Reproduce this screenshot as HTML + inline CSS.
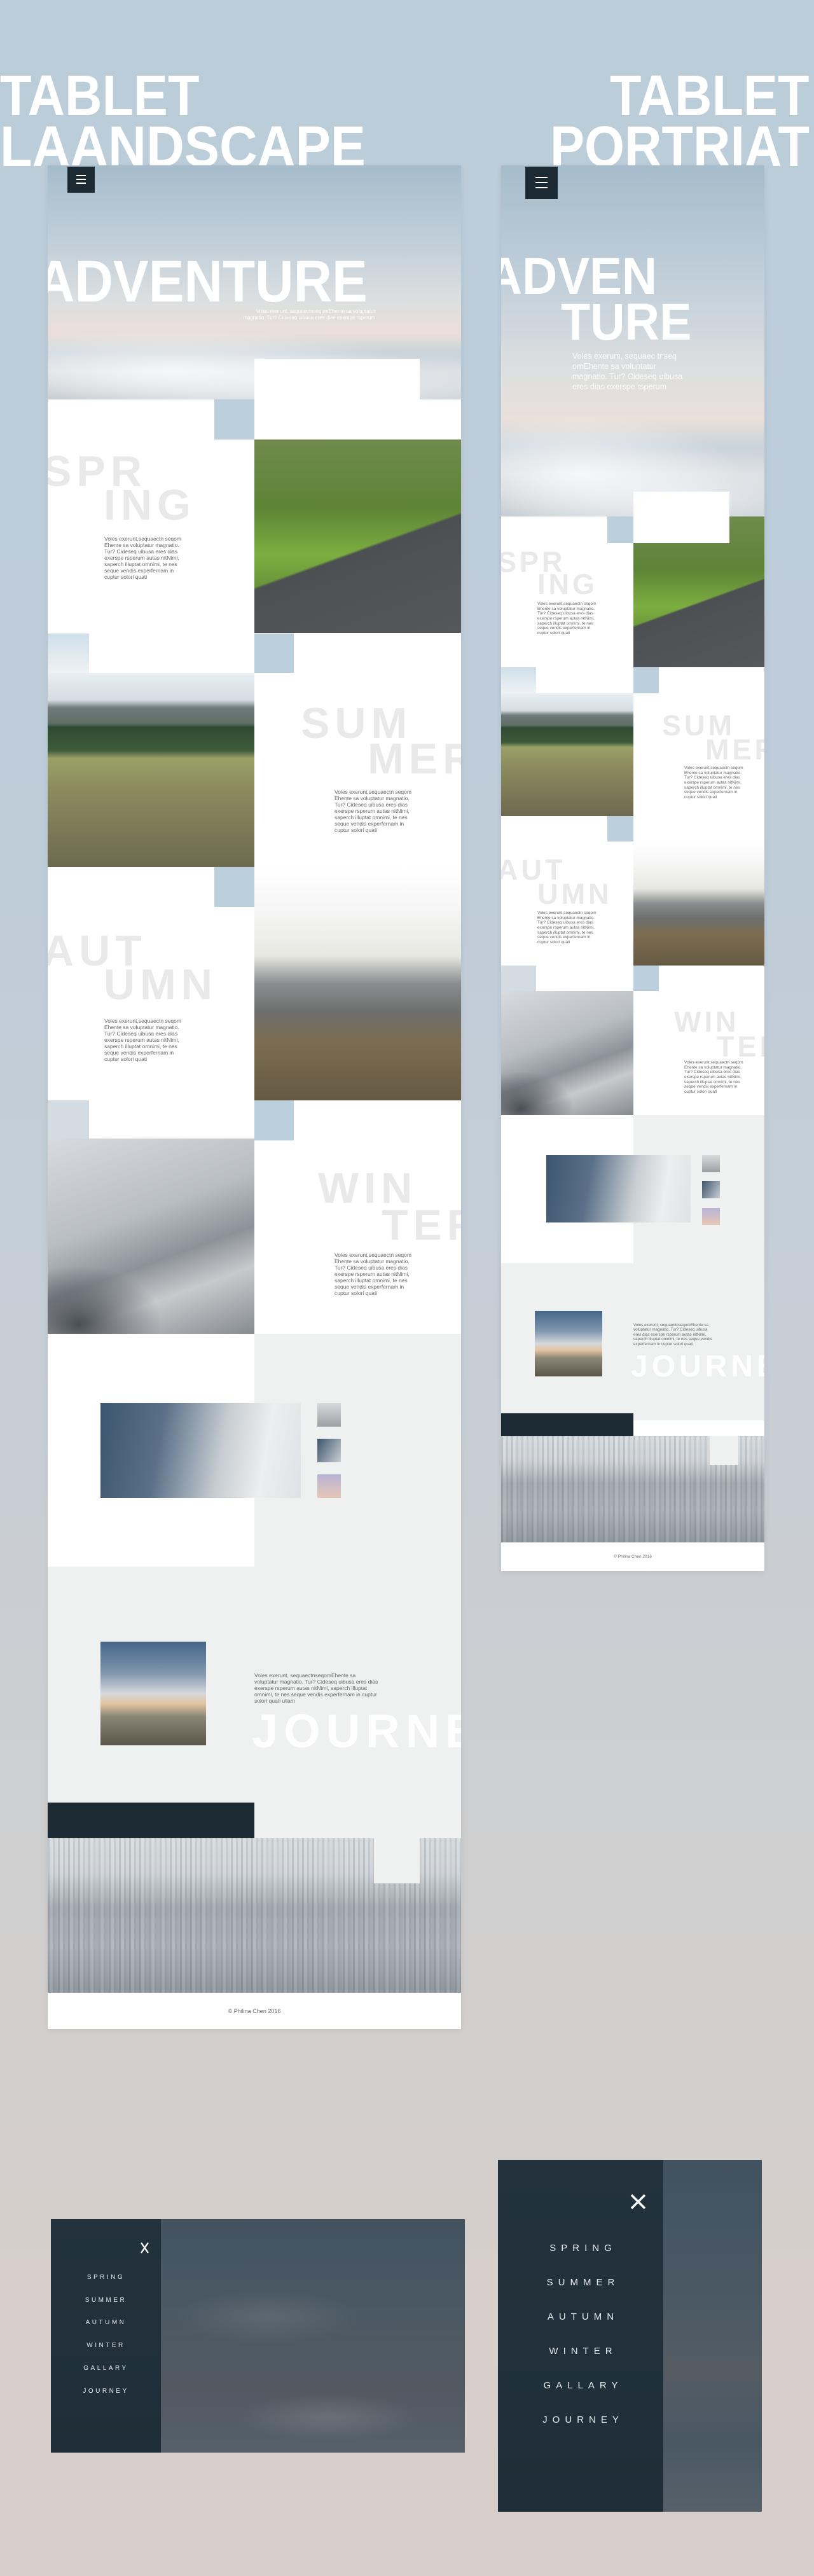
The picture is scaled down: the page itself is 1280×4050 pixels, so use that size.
<!DOCTYPE html>
<html><head><meta charset="utf-8"><style>
*{margin:0;padding:0;box-sizing:border-box}
html,body{width:1280px;height:4050px;overflow:hidden}
body{position:relative;font-family:"Liberation Sans",sans-serif;background:linear-gradient(180deg,#bccdda 0px,#bfcdd9 1400px,#c8ced4 2300px,#d0cfcf 3000px,#d6cfca 3600px,#d8cfca 4050px)}
.a{position:absolute}
.big{position:absolute;color:#fff;font-weight:bold;white-space:nowrap;line-height:1;transform-origin:left top}
.frame{position:absolute;background:#fff;overflow:hidden;box-shadow:0 2px 10px rgba(0,0,0,.08)}
.ham{position:absolute;background:#1b2a33}
.ham i{position:absolute;left:32%;width:36%;height:2px;background:#fff}
.sea{position:absolute;color:#e9e9e9;font-weight:bold;white-space:nowrap;line-height:1}
.txt{position:absolute;color:#666;line-height:1.18}
.bl{position:absolute;background:#bccfdc}
.hero{background:
radial-gradient(ellipse 60% 18% at 30% 88%,rgba(255,255,255,.75),rgba(255,255,255,0)),
radial-gradient(ellipse 70% 14% at 70% 95%,rgba(240,243,246,.8),rgba(255,255,255,0)),
linear-gradient(180deg,#a6bccb 0%,#c3d0da 35%,#dcdfe0 58%,#eadfd9 72%,#c9d3db 80%,#d6dade 88%,#bcc4ca 100%)}
.cyc{background:
linear-gradient(160deg,transparent 55%,#4c5053 56%,#54585a 100%),
linear-gradient(180deg,#6f8a4d 0%,#5d8436 35%,#7cae40 60%,#4d6c33 100%)}
.hik{background:linear-gradient(180deg,#e9eff3 0%,#d4dde2 14%,#6f7a7a 18%,#5f6e66 26%,#2f4a33 28%,#3e5a3b 40%,#9aa067 44%,#8c8a5e 60%,#6d6a50 100%)}
.mtn{background:linear-gradient(180deg,#ffffff 0%,#f4f5f4 20%,#e8e8e2 38%,#8a8d8f 50%,#6e6f6e 62%,#7c6c50 75%,#665a44 100%)}
.win{background:
radial-gradient(ellipse 40% 30% at 15% 95%,#4a4f55,rgba(74,79,85,0)),
linear-gradient(160deg,#d7dbdf 0%,#b9bec3 40%,#8d9298 60%,#c6cacd 75%,#868b90 100%)}
.gal{background:linear-gradient(100deg,#3c5570 0%,#5a7088 30%,#c7cdd2 60%,#eceeef 80%,#dfe2e4 100%)}
.jou{background:linear-gradient(180deg,#466689 0%,#7e95ad 30%,#d6d8dc 50%,#e3c3a0 60%,#8b8778 72%,#5b5648 100%)}
.for{background:
repeating-linear-gradient(90deg,rgba(90,100,108,.18) 0 3px,rgba(255,255,255,.1) 3px 8px,rgba(110,118,125,.15) 8px 11px,rgba(255,255,255,0) 11px 16px),
linear-gradient(180deg,#d6dbde 0%,#cfd4d8 22%,#a2a9af 45%,#aab0b6 70%,#8f979e 100%)}
.t1{background:linear-gradient(180deg,#d9dadc,#9c9fa3)}
.t2{background:linear-gradient(120deg,#3e556c,#c9cfd4)}
.t3{background:linear-gradient(180deg,#b7b3d6,#e7c7b6)}
.grey{position:absolute;background:#eff0f0}
.dark{position:absolute;background:#1b2a33}
.foot{position:absolute;left:0;width:100%;text-align:center;color:#666}
.menu{position:absolute;overflow:hidden}
.menu .p{position:absolute;left:0;top:0;bottom:0;background:linear-gradient(180deg,#23323c,#1f2e38)}
.menu .r{position:absolute;top:0;bottom:0;right:0;background:linear-gradient(180deg,#415260 0%,#4b5964 40%,#545c63 60%,#4a5864 80%,#56606a 100%)}
.mi{position:absolute;color:#e8ecef;text-align:center;white-space:nowrap}
</style></head><body>

<div class="big" style="left:0;top:106px;font-size:90px;transform:scaleX(.9)">TABLET</div>
<div class="big" style="left:0;top:186px;font-size:90px;transform:scaleX(.92)">LAANDSCAPE</div>
<div class="big" style="left:959px;top:106px;font-size:90px;transform:scaleX(.9)">TABLET</div>
<div class="big" style="left:865px;top:186px;font-size:90px;transform:scaleX(.9)">PORTRIAT</div>

<div class="frame" style="left:75px;top:260px;width:650px;height:2930px">
  <div class="a hero" style="left:0;top:0;width:650px;height:368px"></div>
  <div class="ham" style="left:31px;top:2px;width:43px;height:41px"><i style="top:13px"></i><i style="top:19px"></i><i style="top:25px"></i></div>
  <div class="big" style="left:-18px;top:136px;font-size:93px;transform:scaleX(.9)">ADVENTURE</div>
  <div class="a" style="right:135px;top:225px;color:#fff;font-size:8px;line-height:10px;text-align:right">Voles exerunt, sequaectnseqomEhente sa voluptatur<br>magnatio. Tur? Cideseq uibusa eres dias exerspe rsperum</div>
  <div class="a" style="left:325px;top:304px;width:260px;height:127px;background:#fff"></div>
  <div class="bl" style="left:262px;top:368px;width:63px;height:63px"></div>
  <div class="a cyc" style="left:325px;top:431px;width:325px;height:304px"></div>
  <div class="sea" style="left:-8px;top:447px;font-size:68px;letter-spacing:8px">SPR</div>
  <div class="sea" style="left:88px;top:500px;font-size:68px;letter-spacing:8px">ING</div>
  <div class="txt" style="left:89px;top:582px;width:130px;font-size:8.5px">Voles exerunt,sequaectn seqom Ehente sa voluptatur magnatio. Tur? Cideseq uibusa eres dias exerspe rsperum autas nitNimi, saperch illuptat omnimi, te nes seque vendis experfernam in cuptur solori quati</div>

  <div class="a" style="left:0;top:736px;width:65px;height:62px;background:linear-gradient(180deg,#cfe0ea,#eef2f3)"></div>
  <div class="a hik" style="left:0;top:798px;width:325px;height:305px"></div>
  <div class="bl" style="left:325px;top:736px;width:62px;height:62px"></div>
  <div class="sea" style="left:398px;top:843px;font-size:68px;letter-spacing:8px">SUM</div>
  <div class="sea" style="left:503px;top:899px;font-size:68px;letter-spacing:8px">MER</div>
  <div class="txt" style="left:451px;top:980px;width:130px;font-size:8.5px">Voles exerunt,sequaectn seqom Ehente sa voluptatur magnatio. Tur? Cideseq uibusa eres dias exerspe rsperum autas nitNimi, saperch illuptat omnimi, te nes seque vendis experfernam in cuptur solori quati</div>

  <div class="bl" style="left:262px;top:1103px;width:63px;height:63px"></div>
  <div class="sea" style="left:-8px;top:1201px;font-size:68px;letter-spacing:8px">AUT</div>
  <div class="sea" style="left:88px;top:1254px;font-size:68px;letter-spacing:8px">UMN</div>
  <div class="txt" style="left:89px;top:1340px;width:130px;font-size:8.5px">Voles exerunt,sequaectn seqom Ehente sa voluptatur magnatio. Tur? Cideseq uibusa eres dias exerspe rsperum autas nitNimi, saperch illuptat omnimi, te nes seque vendis experfernam in cuptur solori quati</div>
  <div class="a mtn" style="left:325px;top:1103px;width:325px;height:367px"></div>

  <div class="a" style="left:0;top:1470px;width:65px;height:60px;background:#d3dbe3"></div>
  <div class="bl" style="left:325px;top:1470px;width:62px;height:63px"></div>
  <div class="a win" style="left:0;top:1530px;width:325px;height:307px"></div>
  <div class="sea" style="left:425px;top:1574px;font-size:68px;letter-spacing:8px">WIN</div>
  <div class="sea" style="left:525px;top:1632px;font-size:68px;letter-spacing:8px">TER</div>
  <div class="txt" style="left:451px;top:1708px;width:130px;font-size:8.5px">Voles exerunt,sequaectn seqom Ehente sa voluptatur magnatio. Tur? Cideseq uibusa eres dias exerspe rsperum autas nitNimi, saperch illuptat omnimi, te nes seque vendis experfernam in cuptur solori quati</div>

  <div class="grey" style="left:325px;top:1837px;width:325px;height:800px"></div>
  <div class="grey" style="left:0;top:2203px;width:650px;height:430px"></div>
  <div class="a gal" style="left:83px;top:1946px;width:315px;height:149px"></div>
  <div class="a t1" style="left:424px;top:1946px;width:37px;height:37px"></div>
  <div class="a t2" style="left:424px;top:2002px;width:37px;height:37px"></div>
  <div class="a t3" style="left:424px;top:2058px;width:37px;height:37px"></div>

  <div class="a jou" style="left:83px;top:2321px;width:166px;height:163px"></div>
  <div class="txt" style="left:325px;top:2369px;width:195px;font-size:8.5px">Voles exerunt, sequaectnseqomEhente sa voluptatur magnatio. Tur? Cideseq uibusa eres dias exerspe rsperum autas nitNimi, saperch illuptat omnimi, te nes seque vendis experfernam in cuptur solori quati ullam</div>
  <div class="big" style="left:321px;top:2425px;font-size:74px;letter-spacing:9px;opacity:.95">JOURNEY</div>

  <div class="dark" style="left:0;top:2574px;width:325px;height:57px"></div>
  <div class="a for" style="left:0;top:2630px;width:650px;height:243px"></div>
  <div class="grey" style="left:513px;top:2630px;width:72px;height:71px"></div>
  <div class="foot" style="top:2897px;font-size:9px">© Philina Chen 2016</div>
</div>

<div class="frame" style="left:788px;top:260px;width:414px;height:2210px">
  <div class="a hero" style="left:0;top:0;width:414px;height:552px"></div>
  <div class="ham" style="left:38px;top:2px;width:51px;height:51px"><i style="top:16px"></i><i style="top:24px"></i><i style="top:32px"></i></div>
  <div class="big" style="left:-22px;top:134px;font-size:82px;transform:scaleX(.93)">ADVEN</div>
  <div class="big" style="left:94px;top:206px;font-size:82px;transform:scaleX(.92)">TURE</div>
  <div class="a" style="left:112px;top:292px;width:185px;color:rgba(255,255,255,.92);font-size:12.5px;line-height:16px">Voles exerum, sequaec tnseq<br>omEhente sa voluptatur<br>magnatio. Tur? Cideseq uibusa<br>eres dias exerspe rsperum</div>
  <div class="a cyc" style="left:208px;top:552px;width:206px;height:237px"></div>
  <div class="a" style="left:208px;top:513px;width:151px;height:81px;background:#fff"></div>
  <div class="bl" style="left:167px;top:552px;width:41px;height:42px"></div>
  <div class="sea" style="left:-6px;top:601px;font-size:45px;letter-spacing:5px">SPR</div>
  <div class="sea" style="left:57px;top:636px;font-size:45px;letter-spacing:5px">ING</div>
  <div class="txt" style="left:57px;top:686px;width:100px;font-size:6.5px">Voles exerunt,sequaectn seqom Ehente sa voluptatur magnatio. Tur? Cideseq uibusa eres dias exerspe rsperum autas nitNimi, saperch illuptat omnimi, te nes seque vendis experfernam in cuptur solori quati</div>

  <div class="a" style="left:0;top:789px;width:55px;height:41px;background:linear-gradient(180deg,#cfe0ea,#eef2f3)"></div>
  <div class="a hik" style="left:0;top:830px;width:208px;height:193px"></div>
  <div class="bl" style="left:208px;top:789px;width:40px;height:41px"></div>
  <div class="sea" style="left:253px;top:858px;font-size:45px;letter-spacing:5px">SUM</div>
  <div class="sea" style="left:321px;top:896px;font-size:45px;letter-spacing:5px">MER</div>
  <div class="txt" style="left:288px;top:944px;width:100px;font-size:6.5px">Voles exerunt,sequaectn seqom Ehente sa voluptatur magnatio. Tur? Cideseq uibusa eres dias exerspe rsperum autas nitNimi, saperch illuptat omnimi, te nes seque vendis experfernam in cuptur solori quati</div>

  <div class="bl" style="left:167px;top:1023px;width:41px;height:40px"></div>
  <div class="sea" style="left:-6px;top:1085px;font-size:45px;letter-spacing:5px">AUT</div>
  <div class="sea" style="left:57px;top:1123px;font-size:45px;letter-spacing:5px">UMN</div>
  <div class="txt" style="left:57px;top:1172px;width:100px;font-size:6.5px">Voles exerunt,sequaectn seqom Ehente sa voluptatur magnatio. Tur? Cideseq uibusa eres dias exerspe rsperum autas nitNimi, saperch illuptat omnimi, te nes seque vendis experfernam in cuptur solori quati</div>
  <div class="a mtn" style="left:208px;top:1063px;width:206px;height:195px"></div>

  <div class="a" style="left:0;top:1258px;width:55px;height:40px;background:#d3dbe3"></div>
  <div class="bl" style="left:208px;top:1258px;width:40px;height:40px"></div>
  <div class="a win" style="left:0;top:1298px;width:208px;height:195px"></div>
  <div class="sea" style="left:272px;top:1324px;font-size:45px;letter-spacing:5px">WIN</div>
  <div class="sea" style="left:339px;top:1363px;font-size:45px;letter-spacing:5px">TER</div>
  <div class="txt" style="left:288px;top:1407px;width:100px;font-size:6.5px">Voles exerunt,sequaectn seqom Ehente sa voluptatur magnatio. Tur? Cideseq uibusa eres dias exerspe rsperum autas nitNimi, saperch illuptat omnimi, te nes seque vendis experfernam in cuptur solori quati</div>

  <div class="grey" style="left:208px;top:1493px;width:206px;height:480px"></div>
  <div class="grey" style="left:0;top:1726px;width:414px;height:245px"></div>
  <div class="a gal" style="left:71px;top:1556px;width:227px;height:106px"></div>
  <div class="a t1" style="left:316px;top:1556px;width:28px;height:27px"></div>
  <div class="a t2" style="left:316px;top:1597px;width:28px;height:27px"></div>
  <div class="a t3" style="left:316px;top:1639px;width:28px;height:27px"></div>

  <div class="a jou" style="left:53px;top:1801px;width:106px;height:103px"></div>
  <div class="txt" style="left:208px;top:1820px;width:125px;font-size:6.3px">Voles exerunt, sequaectnseqomEhente sa voluptatur magnatio. Tur? Cideseq uibusa eres dias exerspe rsperum autas nitNimi, saperch illuptat omnimi, te nes seque vendis experfernam in cuptur solori quati</div>
  <div class="big" style="left:204px;top:1865px;font-size:48px;letter-spacing:6px">JOURNEY</div>

  <div class="dark" style="left:0;top:1962px;width:208px;height:37px"></div>
  <div class="a for" style="left:0;top:1998px;width:414px;height:167px"></div>
  <div class="grey" style="left:328px;top:1998px;width:45px;height:45px"></div>
  <div class="foot" style="top:2184px;font-size:6.5px">© Philina Chen 2016</div>
</div>

<div class="menu" style="left:80px;top:3489px;width:651px;height:367px">
  <div class="r" style="left:173px;background:radial-gradient(ellipse 30% 12% at 35% 42%,rgba(110,118,125,.5),rgba(0,0,0,0)),radial-gradient(ellipse 30% 10% at 55% 85%,rgba(120,126,132,.6),rgba(0,0,0,0)),linear-gradient(180deg,#42525f 0%,#4b5964 40%,#515960 70%,#56606a 100%)"></div>
  <div class="p" style="width:173px"></div>
  <div class="a" style="left:140px;top:36px;width:15px;height:18px"><svg width="15" height="18" viewBox="0 0 15 18"><path d="M2 1L13 17M13 1L2 17" stroke="#fff" stroke-width="2.4"/></svg></div>
  <div class="mi" style="left:0;width:173px;top:86px;font-size:10px;letter-spacing:3.5px">SPRING</div>
  <div class="mi" style="left:0;width:173px;top:122px;font-size:10px;letter-spacing:3.5px">SUMMER</div>
  <div class="mi" style="left:0;width:173px;top:157px;font-size:10px;letter-spacing:3.5px">AUTUMN</div>
  <div class="mi" style="left:0;width:173px;top:193px;font-size:10px;letter-spacing:3.5px">WINTER</div>
  <div class="mi" style="left:0;width:173px;top:229px;font-size:10px;letter-spacing:3.5px">GALLARY</div>
  <div class="mi" style="left:0;width:173px;top:265px;font-size:10px;letter-spacing:3.5px">JOURNEY</div>
</div>

<div class="menu" style="left:783px;top:3396px;width:415px;height:553px">
  <div class="r" style="left:260px"></div>
  <div class="p" style="width:260px"></div>
  <div class="a" style="left:208px;top:53px;width:25px;height:25px"><svg width="25" height="25" viewBox="0 0 25 25"><path d="M2 2L23 23M23 2L2 23" stroke="#fff" stroke-width="3.5"/></svg></div>
  <div class="mi" style="left:0;width:260px;top:130px;font-size:15px;letter-spacing:8px;padding-left:8px">SPRING</div>
  <div class="mi" style="left:0;width:260px;top:184px;font-size:15px;letter-spacing:8px;padding-left:8px">SUMMER</div>
  <div class="mi" style="left:0;width:260px;top:238px;font-size:15px;letter-spacing:8px;padding-left:8px">AUTUMN</div>
  <div class="mi" style="left:0;width:260px;top:292px;font-size:15px;letter-spacing:8px;padding-left:8px">WINTER</div>
  <div class="mi" style="left:0;width:260px;top:346px;font-size:15px;letter-spacing:8px;padding-left:8px">GALLARY</div>
  <div class="mi" style="left:0;width:260px;top:400px;font-size:15px;letter-spacing:8px;padding-left:8px">JOURNEY</div>
</div>

</body></html>
